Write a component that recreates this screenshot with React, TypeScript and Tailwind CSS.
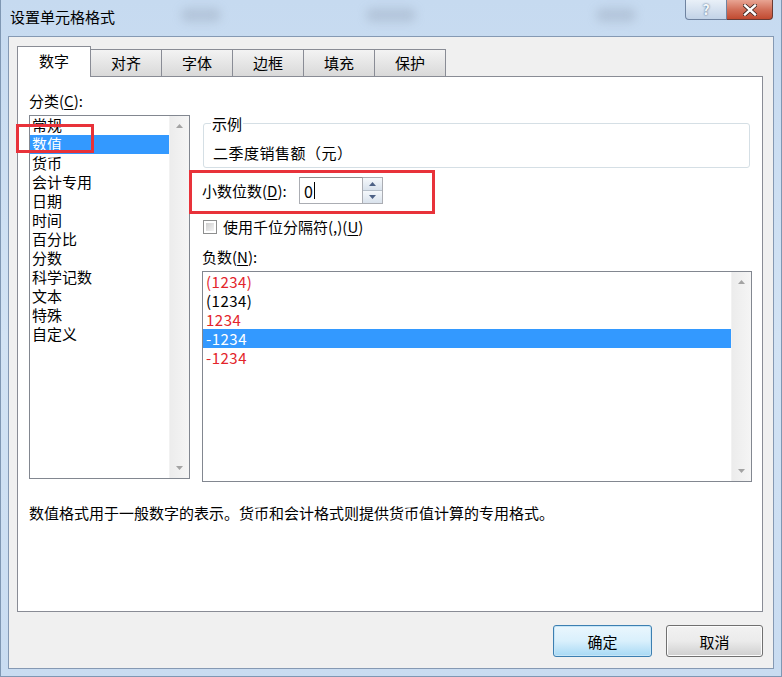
import React from "react"

const categories = [
  "常规",
  "数值",
  "货币",
  "会计专用",
  "日期",
  "时间",
  "百分比",
  "分数",
  "科学记数",
  "文本",
  "特殊",
  "自定义",
]

const negatives = [
  { text: "(1234)", red: true },
  { text: "(1234)", red: false },
  { text: "1234", red: true },
  { text: "-1234", red: false, selected: true },
  { text: "-1234", red: true },
]

const tabs = ["对齐", "字体", "边框", "填充", "保护"]

function Arrow({ down = false }: { down?: boolean }) {
  return (
    <svg width="7" height="4" viewBox="0 0 7 4">
      <path d={down ? "M0 0 L3.5 4 L7 0Z" : "M0 4 L3.5 0 L7 4Z"} fill="#a3a3a3" />
    </svg>
  )
}

// Classic Win7 vertical scrollbar with only the arrow buttons visible
function ScrollBar({ width }: { width: string }) {
  return (
    <div className={`${width} flex flex-col justify-between bg-gradient-to-r from-[#ececec] to-[#f5f5f5] border-l border-[#f2f2f2]`}>
      <div className="h-[20px] flex items-center justify-center">
        <Arrow />
      </div>
      <div className="h-[20px] flex items-center justify-center">
        <Arrow down />
      </div>
    </div>
  )
}

function Mnemonic({ label, k, tail = ":" }: { label: string; k: string; tail?: string }) {
  return (
    <span>
      {label}(<span className="underline underline-offset-2">{k}</span>){tail}
    </span>
  )
}

export default function App() {
  return (
    <div className="relative w-[782px] h-[677px] overflow-hidden bg-gradient-to-b from-[#c6daf0] via-[#d2e3f4] to-[#c9dcf1] font-['Noto_Sans_CJK_SC',sans-serif] text-[15px] text-black border-x border-b border-[#7f97b3]">
      {/* Title bar */}
      <div className="relative h-[36px] flex items-start">
        <div className="absolute left-[180px] top-[8px] w-[40px] h-[14px] rounded-full bg-[#8796a8]/30 blur-[5px]" />
        <div className="absolute left-[365px] top-[8px] w-[50px] h-[14px] rounded-full bg-[#8796a8]/30 blur-[5px]" />
        <div className="absolute left-[595px] top-[8px] w-[40px] h-[14px] rounded-full bg-[#8796a8]/30 blur-[5px]" />
        <span className="relative mt-[7px] ml-[9px] leading-[20px] text-[15px]">设置单元格格式</span>
        <div className="relative ml-auto mr-[8px] flex">
          <div className="w-[42px] h-[20px] rounded-bl-[4px] border border-t-0 border-[#6f83a0] bg-gradient-to-b from-[#e9f0f8] to-[#c2d3e7] flex items-center justify-center text-[14px] font-bold text-[#f4f7fb] [text-shadow:0_0_2px_#2c4a70]">
            ?
          </div>
          <div className="w-[46px] h-[20px] rounded-br-[4px] border border-l-0 border-t-0 border-[#6a3a33] bg-gradient-to-b from-[#e8a493] via-[#d2705a] to-[#c14a30] flex items-center justify-center">
            <svg width="14" height="12" viewBox="0 0 14 12">
              <path d="M2 1.5 L12 10.5 M12 1.5 L2 10.5" stroke="#3b2420" strokeWidth="4" strokeLinecap="square" />
              <path d="M2 1.5 L12 10.5 M12 1.5 L2 10.5" stroke="#ffffff" strokeWidth="2.4" strokeLinecap="square" />
            </svg>
          </div>
        </div>
      </div>

      {/* Client area */}
      <div className="mx-[7px] h-[633px] border border-[#8599b3] bg-[#f0f0f0] pt-[9px] pl-[8px] pr-[10px]">
        {/* Tabs */}
        <div className="flex items-end h-[30px]">
          <div className="relative z-10 w-[74px] h-[31px] -mb-px border border-b-0 border-[#898c95] bg-white flex items-center justify-center pb-[3px] leading-[19px]">
            数字
          </div>
          {tabs.map((t) => (
            <div
              key={t}
              className="w-[71px] h-[27px] border border-b-0 border-l-0 border-[#898c95] bg-gradient-to-b from-[#f3f3f3] to-[#d9d9d9] flex items-center justify-center pb-[2px] leading-[19px]"
            >
              {t}
            </div>
          ))}
        </div>

        {/* Tab panel */}
        <div className="h-[536px] border border-[#898c95] bg-white">
          <div className="flex items-start">
            {/* Category */}
            <div className="ml-[11px] w-[161px] pt-[14px]">
              <div className="leading-[19px]">
                <Mnemonic label="分类" k="C" />
              </div>
              <div className="mt-[5px] h-[364px] border border-[#828790] flex">
                <div className="flex-1">
                  {categories.map((c) => (
                    <div
                      key={c}
                      className={`h-[19px] leading-[18px] pl-[2px] ${c === "数值" ? "bg-[#3399ff] text-white" : ""}`}
                    >
                      {c}
                    </div>
                  ))}
                </div>
                <ScrollBar width="w-[20px]" />
              </div>
            </div>

            {/* Right side */}
            <div className="ml-[12px] w-[550px] pt-[37px]">
              <fieldset className="ml-px mr-[2px] border border-[#d5dfe5] rounded-[3px] px-[9px] pb-[5px]">
                <legend className="ml-[-2px] px-[1px] leading-[19px]">示例</legend>
                <div className="mt-[10px] leading-[19px] tracking-[0.5px]">二季度销售额（元）</div>
              </fieldset>

              <div className="mt-[9px] flex items-center">
                <div className="w-[97px] leading-[19px]">
                  <Mnemonic label="小数位数" k="D" />
                </div>
                <div className="flex h-[27px]">
                  <div className="w-[64px] border border-[#abadb3] border-t-[#8e8f8f] bg-white flex items-center pl-[4px] text-[16px] leading-[20px]">
                    0<span className="ml-px w-px h-[17px] bg-black" />
                  </div>
                  <div className="w-[20px] flex flex-col border border-l-0 border-[#abadb3]">
                    <div className="flex-1 border-b border-[#b7c0ca] bg-gradient-to-b from-[#f5f8fb] to-[#d9e2ec] flex items-center justify-center">
                      <svg width="7" height="4" viewBox="0 0 7 4">
                        <path d="M0 4 L3.5 0 L7 4Z" fill="#4d6185" />
                      </svg>
                    </div>
                    <div className="flex-1 bg-gradient-to-b from-[#f5f8fb] to-[#d9e2ec] flex items-center justify-center">
                      <svg width="7" height="4" viewBox="0 0 7 4">
                        <path d="M0 0 L3.5 4 L7 0Z" fill="#4d6185" />
                      </svg>
                    </div>
                  </div>
                </div>
              </div>

              <div className="mt-[13px] flex items-center">
                <div className="ml-px mr-[6px] w-[14px] h-[14px] border border-[#8e8f8f] bg-white p-[2px]">
                  <div className="w-full h-full bg-gradient-to-br from-[#cfcfcf] to-[#f4f4f4]" />
                </div>
                <div className="leading-[19px]">
                  使用千位分隔符(,)(<span className="underline underline-offset-2">U</span>)
                </div>
              </div>

              <div className="mt-[11px] leading-[19px]">
                <Mnemonic label="负数" k="N" />
              </div>
              <div className="mt-[5px] h-[211px] border border-[#828790] flex">
                <div className="flex-1">
                  {negatives.map((n, i) => (
                    <div
                      key={i}
                      className={`h-[19px] leading-[19px] pl-[3px] tracking-[0.5px] ${
                        n.selected ? "bg-[#3399ff] text-white" : n.red ? "text-[#e3242b]" : "text-black"
                      }`}
                    >
                      {n.text}
                    </div>
                  ))}
                </div>
                <ScrollBar width="w-[20px]" />
              </div>
            </div>
          </div>

          <div className="mt-[21px] ml-[11px] leading-[19px]">
            数值格式用于一般数字的表示。货币和会计格式则提供货币值计算的专用格式。
          </div>
        </div>

        {/* Buttons */}
        <div className="mt-[13px] flex justify-end gap-[14px]">
          <button className="w-[99px] h-[32px] rounded-[3px] border border-[#3c7fb1] bg-gradient-to-b from-[#eaf6fd] via-[#d9f0fc] to-[#a7d9f5] shadow-[inset_0_0_0_1px_#c6e5f7] leading-[19px]">
            确定
          </button>
          <button className="w-[97px] h-[32px] rounded-[3px] border border-[#707070] bg-gradient-to-b from-[#f2f2f2] via-[#ebebeb] to-[#cfcfcf] shadow-[inset_0_0_0_1px_#fcfcfc] leading-[19px]">
            取消
          </button>
        </div>
      </div>

      {/* Red annotation boxes */}
      <div className="absolute left-[15px] top-[124px] w-[78px] h-[29px] border-[3px] border-[#e8323a]" />
      <div className="absolute left-[188px] top-[170px] w-[246px] h-[44px] border-[3px] border-[#e8323a]" />
    </div>
  )
}
